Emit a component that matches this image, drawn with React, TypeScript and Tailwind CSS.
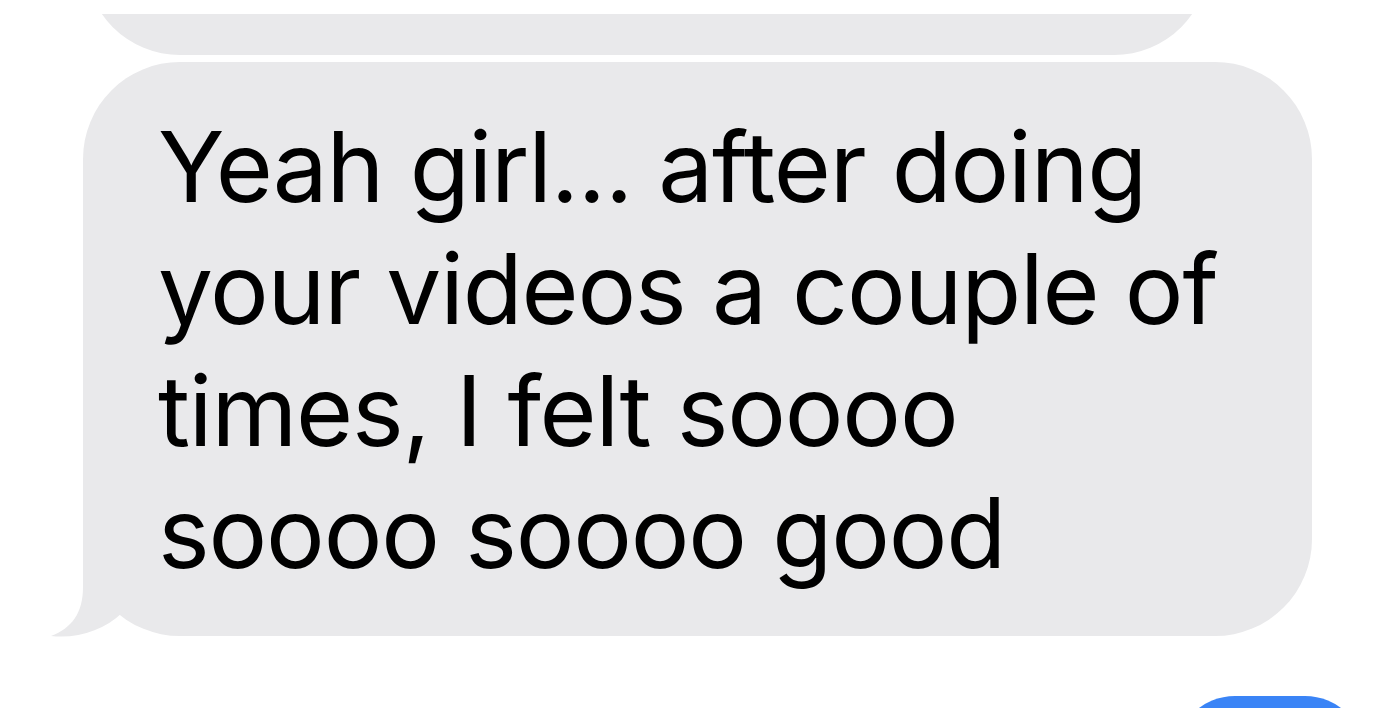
export default function App() {
  const lines = [
    'Yeah girl... after doing',
    'your videos a couple of',
    'times, I felt soooo',
    'soooo soooo good',
  ];

  return (
    <div className="w-[1386px] h-[708px] overflow-hidden bg-white flex flex-col">
      {/* previous bubble, cut off by the screenshot */}
      <div className="mt-[14px] h-[41px] shrink-0 overflow-hidden">
        <div className="ml-[85px] w-[1124px] h-[200px] -mt-[159px] rounded-[95px] bg-[#e9e9eb]" />
      </div>

      {/* main bubble */}
      <div className="relative shrink-0 ml-[83px] mt-[7px] w-[1229px] rounded-[97px] bg-[#e9e9eb] pt-[44px] pb-[42px] pl-[75px]">
        <svg
          className="absolute left-[-40px] bottom-[-1px]"
          width="140"
          height="110"
          viewBox="43 528 140 110"
        >
          <path
            d="M83 528 L83 588 C83 614 72 629 51 637 C78 640 104 631 122 614 L122 528 Z"
            fill="#e9e9eb"
          />
        </svg>
        <div
          className="relative text-black text-[98px] leading-[122px] tracking-[-1.2px]"
          style={{ fontFamily: 'Inter, "Noto Sans", sans-serif' }}
        >
          {lines.map((l) => (
            <div key={l} className="whitespace-nowrap">
              {l}
            </div>
          ))}
        </div>
      </div>

      {/* next bubble peeking in */}
      <div className="ml-[1175px] mt-[60px] w-[190px] h-[120px] shrink-0 rounded-[95px] bg-[#3a84f6]" />
    </div>
  );
}
